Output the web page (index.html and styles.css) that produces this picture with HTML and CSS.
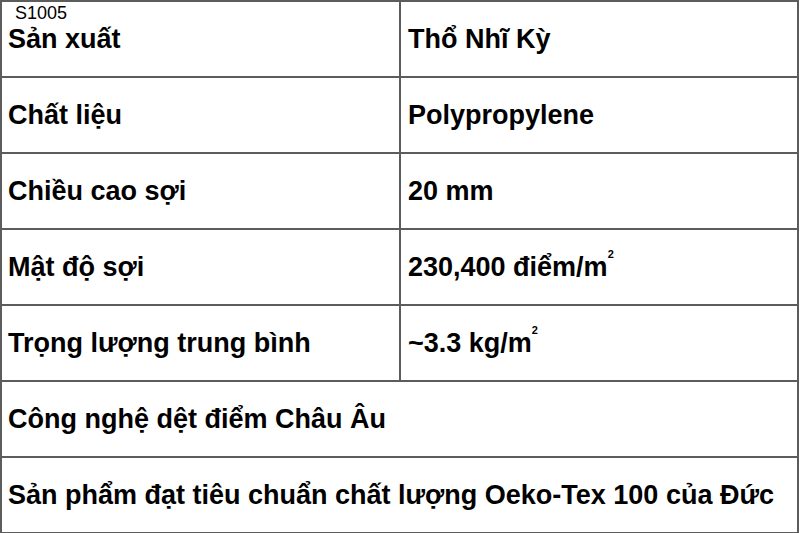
FILE: index.html
```html
<!DOCTYPE html>
<html lang="vi">
<head>
<meta charset="utf-8">
<link rel="stylesheet" href="styles.css">
</head>
<body>
<div class="sheet">
  <span class="code">S1005</span>
  <table class="specs">
    <tr><td class="label">Sản xuất</td><td class="value">Thổ Nhĩ Kỳ</td></tr>
    <tr><td class="label">Chất liệu</td><td class="value">Polypropylene</td></tr>
    <tr><td class="label">Chiều cao sợi</td><td class="value">20 mm</td></tr>
    <tr><td class="label">Mật độ sợi</td><td class="value">230,400 điểm/m<sup>2</sup></td></tr>
    <tr><td class="label">Trọng lượng trung bình</td><td class="value">~3.3 kg/m<sup>2</sup></td></tr>
    <tr><td class="full" colspan="2">Công nghệ dệt điểm Châu Âu</td></tr>
    <tr><td class="full" colspan="2">Sản phẩm đạt tiêu chuẩn chất lượng Oeko-Tex 100 của Đức</td></tr>
  </table>
</div>
</body>
</html>
```
FILE: styles.css
```css
html, body {
  margin: 0;
  padding: 0;
  background: #ffffff;
}
.sheet {
  position: relative;
  width: 800px;
  height: 533px;
  overflow: hidden;
  font-family: "Liberation Sans", Arial, sans-serif;
  color: #000;
}
.code {
  position: absolute;
  left: 15px;
  top: 3px;
  font-size: 18px;
  font-weight: normal;
}
.specs {
  width: 799px;
  border-collapse: collapse;
  table-layout: fixed;
}
.specs td {
  border: 2px solid #5c5c5c;
  height: 74px;
  padding: 0 0 0 6px;
  font-size: 27px;
  font-weight: bold;
  vertical-align: middle;
  white-space: nowrap;
}
.specs td.label {
  width: 391px;
}
.specs td.value {
  padding-left: 7px;
}
.specs sup {
  font-size: 11px;
  vertical-align: top;
  position: relative;
  top: -4px;
}
```
